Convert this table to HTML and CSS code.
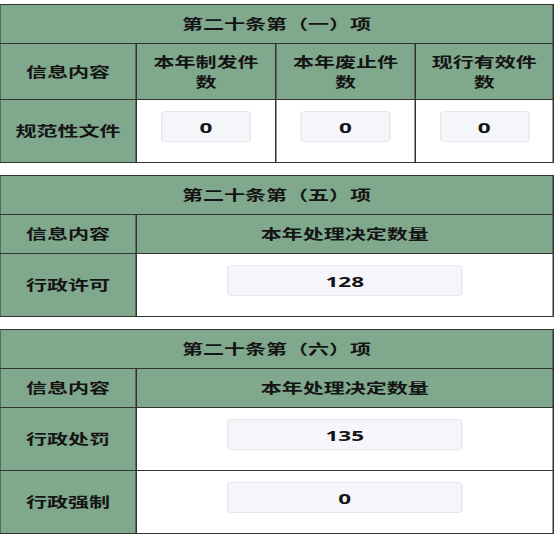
FILE: index.html
```html
<!DOCTYPE html>
<html lang="zh-CN">
<head>
<meta charset="utf-8">
<title>统计</title>
<link rel="stylesheet" href="styles.css">
</head>
<body>
<div class="page">
  <section class="sheet cols-4">
    <div class="cell title span-all">第二十条第（一）项</div>
    <div class="cell head tall">信息内容</div>
    <div class="cell head tall wrap">本年制发件数</div>
    <div class="cell head tall wrap">本年废止件数</div>
    <div class="cell head tall wrap">现行有效件数</div>
    <div class="cell head body">规范性文件</div>
    <div class="cell value"><div class="box small">0</div></div>
    <div class="cell value"><div class="box small">0</div></div>
    <div class="cell value"><div class="box small">0</div></div>
  </section>

  <section class="sheet cols-2">
    <div class="cell title span-all">第二十条第（五）项</div>
    <div class="cell head">信息内容</div>
    <div class="cell head">本年处理决定数量</div>
    <div class="cell head body">行政许可</div>
    <div class="cell value"><div class="box wide">128</div></div>
  </section>

  <section class="sheet cols-2">
    <div class="cell title span-all">第二十条第（六）项</div>
    <div class="cell head">信息内容</div>
    <div class="cell head">本年处理决定数量</div>
    <div class="cell head body">行政处罚</div>
    <div class="cell value"><div class="box wide">135</div></div>
    <div class="cell head body">行政强制</div>
    <div class="cell value"><div class="box wide">0</div></div>
  </section>
</div>
</body>
</html>
```

FILE: styles.css
```css
html, body {
  margin: 0;
  padding: 0;
  background: #ffffff;
}

body {
  font-family: "Noto Sans", "Noto Sans CJK SC", sans-serif;
  font-size: 14px;
  font-weight: 700;
  color: #141414;
  overflow: hidden;
}

.page {
  width: 370px;
  margin-left: -1px;
  padding-top: 4px;
  transform: scaleX(1.5);
  transform-origin: 0 0;
  display: flex;
  flex-direction: column;
  gap: 12px;
}

.sheet {
  display: grid;
  gap: 1px;
  padding: 1px;
  background: #333333;
}

.cols-4 {
  grid-template-columns: 90px 92px 92px 91px;
}

.cols-2 {
  grid-template-columns: 90px 277px;
}

.span-all {
  grid-column: 1 / -1;
}

.cell {
  display: flex;
  align-items: center;
  justify-content: center;
  text-align: center;
  line-height: 20px;
  background: #80a88c;
  height: 38px;
}

.head.tall {
  height: 55px;
}

.wrap {
  padding: 0 8px;
}

.body {
  height: 62px;
}

.value {
  background: #ffffff;
  height: 62px;
  align-items: flex-start;
  padding-top: 11px;
  box-sizing: border-box;
}

.box {
  height: 31px;
  box-sizing: border-box;
  background: #f5f6fa;
  border: 1px solid #e5e8ee;
  border-radius: 3px;
  display: flex;
  align-items: center;
  justify-content: center;
  font-size: 15px;
}

.box.small {
  width: 60px;
}

.box.wide {
  width: 157px;
}
```
